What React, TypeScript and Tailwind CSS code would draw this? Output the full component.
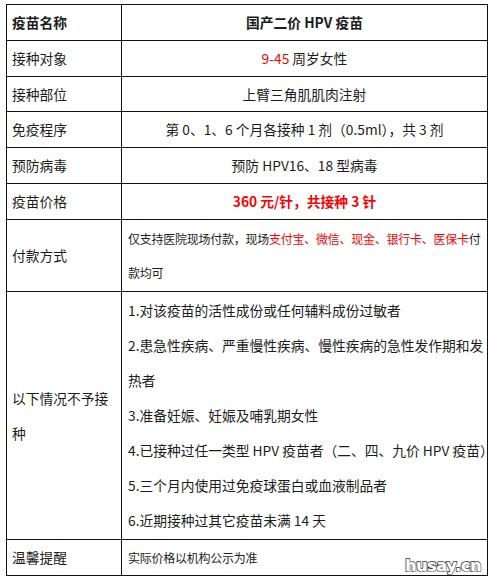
import * as React from "react";

const font = "font-['Noto_Sans_CJK_SC','Microsoft_YaHei',sans-serif]";

function Row({
  label,
  bold,
  className,
  last,
  children,
}: {
  label: React.ReactNode;
  bold?: boolean;
  className: string;
  last?: boolean;
  children: React.ReactNode;
}) {
  return (
    <div className={`flex ${className} ${last ? "" : "border-b border-[#111]"}`}>
      <div
        className={`flex w-[115px] shrink-0 items-center border-r border-[#111] pl-[5px] pr-[2px] text-[13.75px] ${
          bold ? "font-bold" : ""
        }`}
      >
        {label}
      </div>
      <div className="flex min-w-0 flex-1">{children}</div>
    </div>
  );
}

function Center({ children, className = "" }: { children: React.ReactNode; className?: string }) {
  return (
    <div className={`flex flex-1 items-center justify-center text-[13.75px] ${className}`}>
      {children}
    </div>
  );
}

const rules = [
  "1.对该疫苗的活性成份或任何辅料成份过敏者",
  "2.患急性疾病、严重慢性疾病、慢性疾病的急性发作期和发",
  "热者",
  "3.准备妊娠、妊娠及哺乳期女性",
  "4.已接种过任一类型 HPV 疫苗者（二、四、九价 HPV 疫苗）",
  "5.三个月内使用过免疫球蛋白或血液制品者",
  "6.近期接种过其它疫苗未满 14 天",
];

export default function App() {
  return (
    <div className={`h-[582px] w-[495px] bg-white pl-[6px] pt-[4px] text-[#1c1c1c] ${font}`}>
      <div className="relative w-[482px] border border-[#111]">
        <Row label="疫苗名称" bold className="h-[36px]">
          <Center className="font-bold">国产二价 HPV 疫苗</Center>
        </Row>
        <Row label="接种对象" className="h-[36px]">
          <Center>
            <span className="text-[#ff0000]">9-45</span>&nbsp;周岁女性
          </Center>
        </Row>
        <Row label="接种部位" className="h-[35px]">
          <Center>上臂三角肌肌肉注射</Center>
        </Row>
        <Row label="免疫程序" className="h-[36px]">
          <Center>第 0、1、6 个月各接种 1 剂（0.5ml），共 3 剂</Center>
        </Row>
        <Row label="预防病毒" className="h-[36px]">
          <Center>预防 HPV16、18 型病毒</Center>
        </Row>
        <Row label="疫苗价格" className="h-[36px]">
          <Center className="font-bold text-[#ff0000]">360 元/针，共接种 3 针</Center>
        </Row>
        <Row label="付款方式" className="h-[72px]">
          <div className="flex flex-1 flex-col justify-center whitespace-nowrap pl-[6px] text-[12px] leading-[34px] tracking-[-0.25px]">
            <div>
              仅支持医院现场付款，现场
              <span className="text-[#ff0000]">支付宝、微信、现金、银行卡、医保卡</span>付
            </div>
            <div>款均可</div>
          </div>
        </Row>
        <Row label={<span className="leading-[35px]">以下情况不予接种</span>} className="h-[248px]">
          <div className="flex flex-1 flex-col justify-center whitespace-nowrap pl-[6px] text-[13.75px] leading-[35px]">
            {rules.map((r) => (
              <div key={r}>{r}</div>
            ))}
          </div>
        </Row>
        <Row label="温馨提醒" className="h-[35px]" last>
          <div className="flex flex-1 items-center pl-[6px] text-[12px] tracking-[-0.25px]">
            实际价格以机构公示为准
          </div>
        </Row>

        <div className="absolute bottom-[1px] right-[6px] font-['DejaVu_Sans',sans-serif] text-[16px] font-bold leading-none tracking-[-0.3px] text-white [-webkit-text-stroke:1.6px_#333] [paint-order:stroke_fill] [text-shadow:1px_1px_0_#aaa]">
          husay.cn
        </div>
      </div>
    </div>
  );
}
